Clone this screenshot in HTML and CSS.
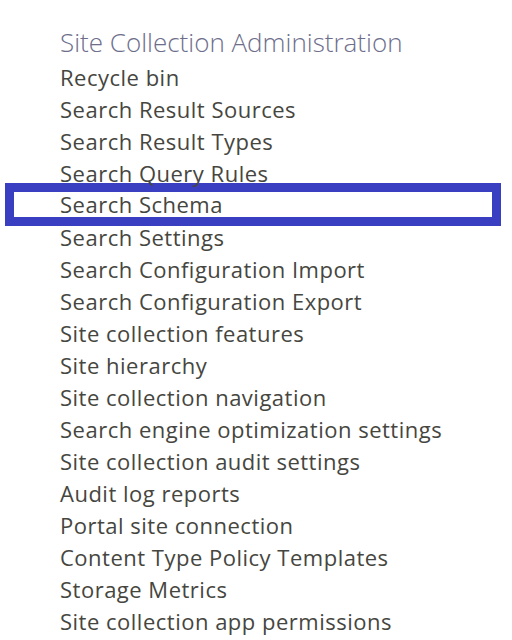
FILE: index.html
```html
<!DOCTYPE html>
<html lang="en">
<head>
  <meta charset="UTF-8">
  <title>Site Settings</title>
  <link rel="stylesheet" href="styles.css">
</head>
<body>
  <div class="section">
    <h2>Site Collection Administration</h2>
    <ul class="links">
      <li><a href="#">Recycle bin</a></li>
      <li><a href="#">Search Result Sources</a></li>
      <li><a href="#">Search Result Types</a></li>
      <li><a href="#">Search Query Rules</a></li>
      <li class="marked"><a href="#">Search Schema</a></li>
      <li><a href="#">Search Settings</a></li>
      <li><a href="#">Search Configuration Import</a></li>
      <li><a href="#">Search Configuration Export</a></li>
      <li><a href="#">Site collection features</a></li>
      <li><a href="#">Site hierarchy</a></li>
      <li><a href="#">Site collection navigation</a></li>
      <li><a href="#">Search engine optimization settings</a></li>
      <li><a href="#">Site collection audit settings</a></li>
      <li><a href="#">Audit log reports</a></li>
      <li><a href="#">Portal site connection</a></li>
      <li><a href="#">Content Type Policy Templates</a></li>
      <li><a href="#">Storage Metrics</a></li>
      <li><a href="#">Site collection app permissions</a></li>
    </ul>
  </div>
</body>
</html>
```

FILE: styles.css
```css
body {
  margin: 0;
  background: #fff;
  font-family: 'Open Sans', 'Noto Sans', sans-serif;
}
.section {
  padding: 24px 0 0 5px;
  width: 496px;
}
h2 {
  margin: 0 0 0 55px;
  font-size: 26px;
  font-weight: 300;
  color: #6e6e8c;
  line-height: 37px;
}
.links {
  list-style: none;
  margin: 0;
  padding: 0;
}
.links li {
  height: 32px;
  line-height: 32px;
  padding-left: 55px;
  box-sizing: border-box;
}
.links a {
  color: #464640;
  text-decoration: none;
  font-size: 22px;
  letter-spacing: 0.5px;
}
/* highlighted entry */
.links li.marked {
  border: 9px solid #3a3fc2;
  padding-left: 46px;
  height: 43px;
  line-height: 25px;
  margin: -6px 0 -5px;
}
```
